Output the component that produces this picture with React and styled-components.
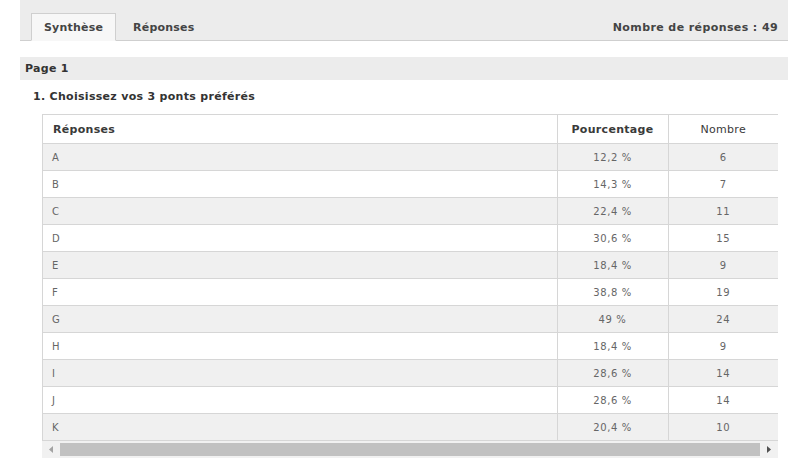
import React from 'react';
import styled, { createGlobalStyle } from 'styled-components';

const Global = createGlobalStyle`
body {
    margin: 0;
    background: #ffffff;
    font-family: "DejaVu Sans", Verdana, sans-serif;
    color: #333333;
}
`

const Page = styled.div`
padding: 0 12px 0 20px;
`

const TopBar = styled.div`
height: 40px;
background-color: #ececec;
border-bottom: 1px solid #cfcfcf;
display: flex;
align-items: flex-end;
justify-content: space-between;
padding-left: 11px;
`

const Tabs = styled.div`
display: flex;
align-items: flex-end;
`

const Tab = styled.div`
box-sizing: border-box;
height: 28px;
padding: 0 12px;
margin-right: 4px;
margin-bottom: -1px;
display: flex;
align-items: center;
font-size: 11px;
font-weight: bold;
letter-spacing: 0.2px;
color: #444444;
background: ${p => p.$active ? '#f7f7f7' : 'transparent'};
border: 1px solid ${p => p.$active ? '#cfcfcf' : 'transparent'};
border-bottom: 1px solid ${p => p.$active ? '#f7f7f7' : 'transparent'};
`

const Count = styled.div`
font-size: 11px;
font-weight: bold;
letter-spacing: 0.4px;
color: #444444;
padding: 0 10px 6px 0;
`

const Band = styled.div`
margin-top: 16px;
height: 23px;
background-color: #ececec;
display: flex;
align-items: center;
padding-left: 5px;
font-size: 11px;
font-weight: bold;
letter-spacing: 0.3px;
color: #333333;
`

const Question = styled.div`
margin: 10px 0 0 13px;
height: 14px;
line-height: 14px;
font-size: 11px;
font-weight: bold;
letter-spacing: 0.3px;
color: #333333;
`

const TableWrap = styled.div`
margin: 10px 10px 0 22px;
`

const Table = styled.table`
width: 100%;
border-collapse: collapse;
table-layout: fixed;
`

const Th = styled.th`
height: 28px;
padding: 0 ${p => p.$left ? '10px' : '0'};
text-align: ${p => p.$left ? 'left' : 'center'};
font-size: 11px;
font-weight: ${p => p.$plain ? 'normal' : 'bold'};
letter-spacing: 0.3px;
color: #3a3a3a;
background: #ffffff;
border: 1px solid #d6d6d6;
border-right: ${p => p.$last ? 'none' : '1px solid #d6d6d6'};
`

const Row = styled.tr`
background: ${p => p.$odd ? '#f0f0f0' : '#ffffff'};
`

const Td = styled.td`
height: 26px;
padding: 0 ${p => p.$left ? '9px' : '0'};
text-align: ${p => p.$left ? 'left' : 'center'};
font-size: 10px;
letter-spacing: 0.6px;
color: #666666;
border: 1px solid #d6d6d6;
border-right: ${p => p.$last ? 'none' : '1px solid #d6d6d6'};
`

const Scrollbar = styled.div`
height: 17px;
background: #f1f1f1;
display: flex;
align-items: center;
`

const Arrow = styled.div`
width: 18px;
height: 17px;
display: flex;
align-items: center;
justify-content: center;
`

const Thumb = styled.div`
flex: 1;
height: 13px;
background: #c1c1c1;
`

const rows = [
    ['A', '12,2 %', 6],
    ['B', '14,3 %', 7],
    ['C', '22,4 %', 11],
    ['D', '30,6 %', 15],
    ['E', '18,4 %', 9],
    ['F', '38,8 %', 19],
    ['G', '49 %', 24],
    ['H', '18,4 %', 9],
    ['I', '28,6 %', 14],
    ['J', '28,6 %', 14],
    ['K', '20,4 %', 10],
];

const App = () => {
    return (
        <Page>
            <Global />
            <TopBar>
                <Tabs>
                    <Tab $active>Synthèse</Tab>
                    <Tab>Réponses</Tab>
                </Tabs>
                <Count>Nombre de réponses : 49</Count>
            </TopBar>
            <Band>Page 1</Band>
            <Question>1. Choisissez vos 3 ponts préférés</Question>
            <TableWrap>
                <Table>
                    <colgroup>
                        <col />
                        <col style={{ width: '111px' }} />
                        <col style={{ width: '110px' }} />
                    </colgroup>
                    <thead>
                        <tr>
                            <Th $left>Réponses</Th>
                            <Th>Pourcentage</Th>
                            <Th $last $plain>Nombre</Th>
                        </tr>
                    </thead>
                    <tbody>
                        {rows.map((r, i) => (
                            <Row key={r[0]} $odd={i % 2 === 0}>
                                <Td $left>{r[0]}</Td>
                                <Td>{r[1]}</Td>
                                <Td $last>{r[2]}</Td>
                            </Row>
                        ))}
                    </tbody>
                </Table>
                <Scrollbar>
                    <Arrow>
                        <svg width="4" height="7" viewBox="0 0 4 7"><path d="M4 0 L0 3.5 L4 7 Z" fill="#a3a3a3" /></svg>
                    </Arrow>
                    <Thumb />
                    <Arrow>
                        <svg width="4" height="7" viewBox="0 0 4 7"><path d="M0 0 L4 3.5 L0 7 Z" fill="#505050" /></svg>
                    </Arrow>
                </Scrollbar>
            </TableWrap>
        </Page>
    );
};

export default App;
